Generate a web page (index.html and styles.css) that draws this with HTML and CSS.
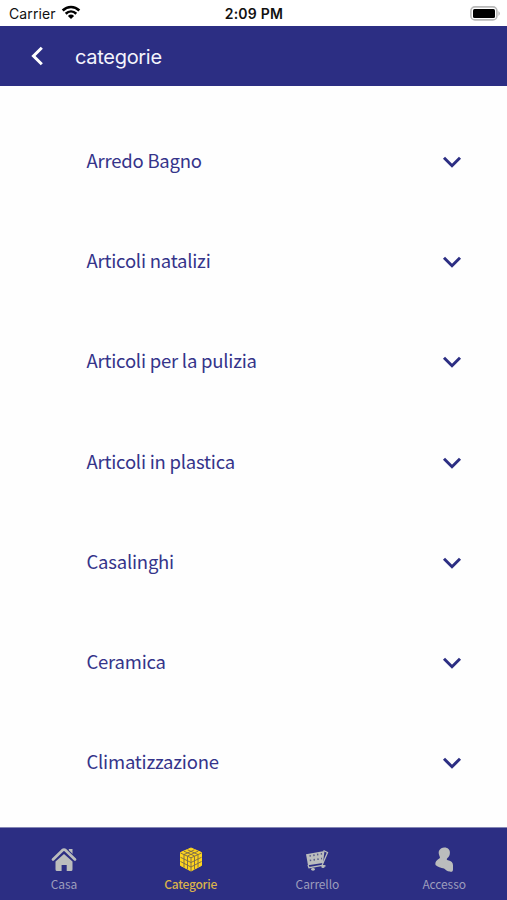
FILE: index.html
```html
<!DOCTYPE html>
<html lang="it">
<head>
<meta charset="utf-8">
<title>categorie</title>
<link rel="stylesheet" href="styles.css">
</head>
<body>
<div class="status">
  <div class="carrier"><span>Carrier</span><svg width="20" height="15" viewBox="0 0 20 15" fill="none" stroke="#000" stroke-width="2.6"><path d="M1.7 5.5C6.400 .8 13.600 .8 18.300 5.500M4.700 8.700C7.800 5.800 12.200 5.800 15.300 8.700"/><path d="M10 14L6.900 10.900Q10 8.300 13.100 10.900Z" fill="#000" stroke="none"/></svg></div>
  <div class="time">2:09 PM</div>
  <svg class="battery" width="31" height="15" viewBox="0 0 31 15"><rect x=".9" y=".9" width="26" height="13" rx="4" fill="#fff" stroke="#b9b9b9" stroke-width="1.6"/><rect x="3" y="3" width="22" height="9" rx="1.500" fill="#000"/><path d="M28.500 5Q31 7.500 28.500 10Z" fill="#aaa"/></svg>
</div>
<header class="bar">
  <svg width="14" height="20" viewBox="0 0 14 20" fill="none" stroke="#fff" stroke-width="3"><path d="M11.800 1.800L3.500 10L11.800 18.200"/></svg>
  <h1>categorie</h1>
</header>
<main class="list">
  <div class="row"><span>Arredo Bagno</span><svg class="chev" viewBox="0 0 20 12"><path d="M2 1.800L10 9.700L18 1.800"/></svg></div>
  <div class="row"><span>Articoli natalizi</span><svg class="chev" viewBox="0 0 20 12"><path d="M2 1.800L10 9.700L18 1.800"/></svg></div>
  <div class="row"><span>Articoli per la pulizia</span><svg class="chev" viewBox="0 0 20 12"><path d="M2 1.800L10 9.700L18 1.800"/></svg></div>
  <div class="row"><span>Articoli in plastica</span><svg class="chev" viewBox="0 0 20 12"><path d="M2 1.800L10 9.700L18 1.800"/></svg></div>
  <div class="row"><span>Casalinghi</span><svg class="chev" viewBox="0 0 20 12"><path d="M2 1.800L10 9.700L18 1.800"/></svg></div>
  <div class="row"><span>Ceramica</span><svg class="chev" viewBox="0 0 20 12"><path d="M2 1.800L10 9.700L18 1.800"/></svg></div>
  <div class="row"><span>Climatizzazione</span><svg class="chev" viewBox="0 0 20 12"><path d="M2 1.800L10 9.700L18 1.800"/></svg></div>
</main>
<nav class="tabs">
  <div class="tab">
    <svg width="26" height="26" viewBox="0 0 26 26" fill="#bbbdbd"><path d="M4.500 14.500L13 7L21.500 14.500V22.500Q21.500 24 20 24H15.700V18H10.600V24H6Q4.500 24 4.500 22.500Z"/><path d="M17.800 2H21.500V10L17.800 7Z"/><path d="M1.700 12.700L11.500 3.200Q13 2 14.500 3.200L24.300 12.700" fill="none" stroke="#2c2e83" stroke-width="4.600"/><path d="M2 12.400L11.500 3.200Q13 2 14.500 3.200L24 12.400" fill="none" stroke="#bbbdbd" stroke-width="2.800" stroke-linecap="round"/></svg>
    <span>Casa</span>
  </div>
  <div class="tab active">
    <svg width="26" height="26" viewBox="0 0 26 26"><path d="M13 1L23.500 5.500V18.500L13 24L2.500 18.500V5.500Z" fill="#ffd51c" stroke="#ffd51c" stroke-linejoin="round"/><g fill="none" stroke="#77684c" stroke-width=".9"><path d="M2.500 6L13 10.800L23.500 6M13 10.800V24M2.500 10.300L13 15.500L23.500 10.300M2.500 14.500L13 20L23.500 14.500M6 7.500V20.500M9.500 9.300V22.500M16.500 9.300V22.500M20 7.500V20.500M6 4.200L16.500 9M9.500 2.800L20 7.500M20 4.200L9.500 9M16.500 2.800L6 7.500"/></g></svg>
    <span>Categorie</span>
  </div>
  <div class="tab">
    <svg width="26" height="26" viewBox="0 0 26 26"><path d="M2 7.300L20.500 4L19 16L4 18.300Z" fill="#bbbdbd"/><g fill="none" stroke="#bbbdbd" stroke-width="1.300"><path d="M19.500 3.500L23.500 5.500L18 18.500L5 20.700L4 18M18 18.500L21.500 19"/></g><g stroke="#555889" stroke-width="1.700" stroke-dasharray="1.400 2.400"><path d="M5.500 9L18.500 6.700M5.800 13.500L18 11.500"/></g><ellipse cx="9" cy="22.300" rx="1.900" ry="1.400" fill="#bbbdbd"/><ellipse cx="19" cy="19.800" rx="1.700" ry="1.300" fill="#bbbdbd"/></svg>
    <span>Carrello</span>
  </div>
  <div class="tab">
    <svg width="26" height="26" viewBox="0 0 26 26" fill="#bbbdbd"><path d="M13 .5C16.500 .2 19 2.500 18.900 5.500C19 8 18 9.600 16.500 11C15.400 12.200 15.600 13 17 13.300C20.500 14 22 15.500 22 18.300V22.500C22 24.700 20.600 25.200 18.800 24.600C16 24.300 14.800 22.800 13 21.500C10 20.500 6.500 19.800 4.500 17.900C3.700 15.500 5.500 13 8.600 11.300C9.800 10.500 7.700 8.300 7.700 5.700C7.600 3 10 .7 13 .5Z"/></svg>
    <span>Accesso</span>
  </div>
</nav>
</body>
</html>
```
FILE: styles.css
```css
* { box-sizing: border-box; }
body {
  margin: 0;
  width: 507px;
  height: 900px;
  display: flex;
  flex-direction: column;
  overflow: hidden;
  background: #fefefe;
  font-family: "Noto Sans CJK SC", "Noto Sans", sans-serif;
}
.status {
  height: 26px;
  flex: none;
  display: grid;
  grid-template-columns: 1fr auto 1fr;
  align-items: center;
  padding: 1px 6px 0 9px;
  background: #fff;
  color: #111;
  font: 14px Inter, sans-serif;
}
.carrier { display: flex; align-items: center; gap: 5px; letter-spacing: .12px; }
.carrier svg { margin-top: -2px; }
.time { font-weight: 600; font-size: 14px; letter-spacing: .25px; margin-right: 2px; }
.battery { justify-self: end; margin-top: -1px; }
.bar {
  height: 60px;
  flex: none;
  display: flex;
  align-items: center;
  gap: 31px;
  padding-left: 30px;
  background: #2c2e83;
  color: #f4f4fc;
}
.bar h1 { margin: 1px 0 0; font: 400 20px Inter, sans-serif; letter-spacing: -.3px; }
.list { flex: 1; min-height: 0; padding-top: 25px; }
.row {
  height: 100.2px;
  display: flex;
  align-items: center;
  justify-content: space-between;
  padding: 0 45px 0 86.500px;
  color: #35348a;
  font-size: 18.500px;
  font-weight: 400;
  letter-spacing: -.22px;
}
.row span { line-height: 28px; margin-top: -2px; }
.chev { width: 20px; height: 12px; margin-top: 2px; fill: none; stroke: #2c2e83; stroke-width: 3; }
.tabs {
  height: 73px;
  flex: none;
  display: flex;
  background: #2c2e83;
  border-top: 1px solid #8587b5;
  color: #9c9dbc;
  font-size: 12px;
}
.tab {
  flex: 1;
  display: flex;
  flex-direction: column;
  align-items: center;
  padding: 19px 0 0 1px;
  letter-spacing: -.1px;
}
.tab span { line-height: 18px; margin-top: 2px; }
.active { color: #d9b14b; font-weight: 500; letter-spacing: -.25px; }
```
